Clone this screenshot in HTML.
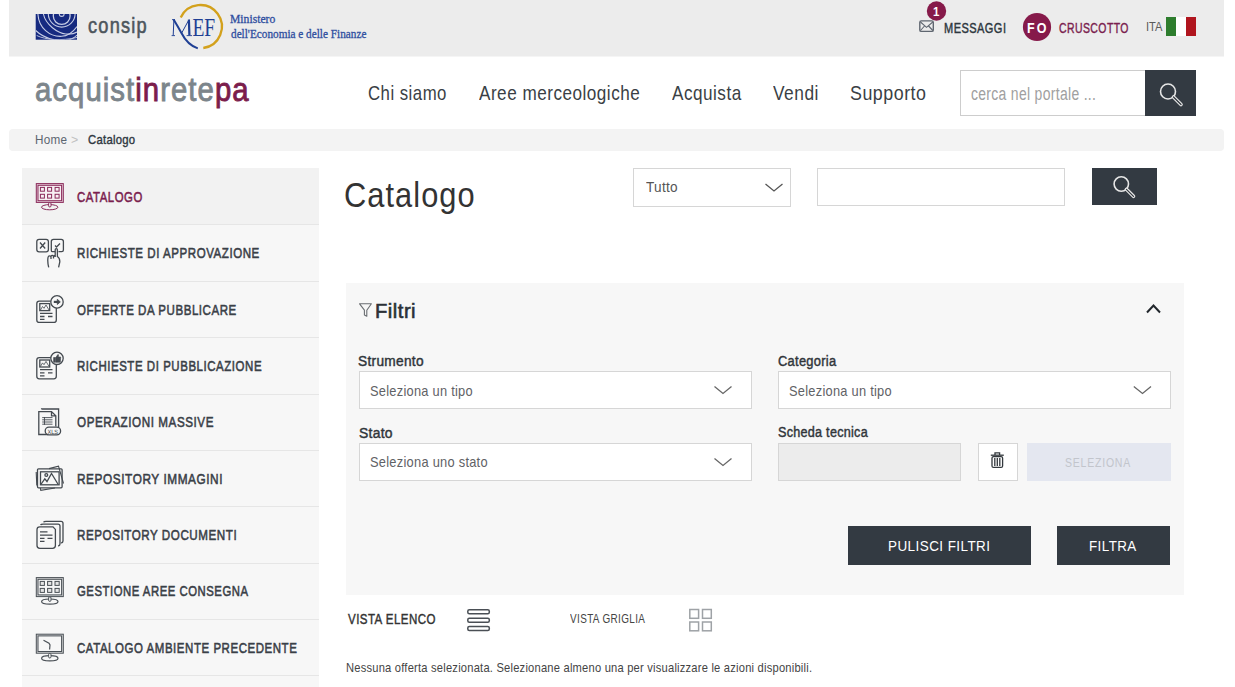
<!DOCTYPE html>
<html><head><meta charset="utf-8"><title>Catalogo</title>
<style>
html,body{margin:0;padding:0;background:#fff;width:1235px;height:687px;overflow:hidden;position:relative}
.tx{position:absolute;white-space:nowrap;line-height:1;transform-origin:0 0}
.r{position:absolute;box-sizing:border-box}
svg{position:absolute;overflow:visible}
</style></head><body>
<!-- top bar -->
<div class="r" style="left:9px;top:0;width:1215px;height:56px;background:#ececec"></div>
<div class="r" style="left:9px;top:56px;width:1215px;height:1px;background:#f5f5f5"></div>
<!-- breadcrumb -->
<div class="r" style="left:9px;top:129px;width:1215px;height:22px;background:#f3f3f3;border-radius:4px"></div>
<!-- search -->
<div class="r" style="left:960px;top:70px;width:186px;height:46px;background:#fff;border:1px solid #cdcdcd;border-right:none"></div>
<div class="r" style="left:1145px;top:70px;width:51px;height:46px;background:#333a42"></div>
<!-- sidebar -->
<div class="r" style="left:22px;top:168px;width:297px;height:56px;background:#f2f2f2"></div>
<div class="r" style="left:22px;top:224px;width:297px;height:463px;background:#f7f7f7"></div>
<div class="r" style="left:22px;top:224px;width:297px;height:1px;background:#e6e6e6"></div>
<div class="r" style="left:22px;top:280.5px;width:297px;height:1px;background:#e6e6e6"></div>
<div class="r" style="left:22px;top:337px;width:297px;height:1px;background:#e6e6e6"></div>
<div class="r" style="left:22px;top:393.5px;width:297px;height:1px;background:#e6e6e6"></div>
<div class="r" style="left:22px;top:450px;width:297px;height:1px;background:#e6e6e6"></div>
<div class="r" style="left:22px;top:506px;width:297px;height:1px;background:#e6e6e6"></div>
<div class="r" style="left:22px;top:563px;width:297px;height:1px;background:#e6e6e6"></div>
<div class="r" style="left:22px;top:619px;width:297px;height:1px;background:#e6e6e6"></div>
<div class="r" style="left:22px;top:675px;width:297px;height:1px;background:#e6e6e6"></div>
<!-- content top controls -->
<div class="r" style="left:633px;top:168px;width:158px;height:39px;background:#fff;border:1px solid #d6d6d6"></div>
<div class="r" style="left:817px;top:168px;width:248px;height:38px;background:#fff;border:1px solid #d6d6d6"></div>
<div class="r" style="left:1092px;top:168px;width:65px;height:37px;background:#333a42"></div>
<!-- filter panel -->
<div class="r" style="left:346px;top:283px;width:838px;height:312px;background:#f7f7f7"></div>
<div class="r" style="left:359px;top:371px;width:393px;height:38px;background:#fff;border:1px solid #d6d6d6"></div>
<div class="r" style="left:778px;top:371px;width:393px;height:38px;background:#fff;border:1px solid #d6d6d6"></div>
<div class="r" style="left:359px;top:443px;width:393px;height:38px;background:#fff;border:1px solid #d6d6d6"></div>
<div class="r" style="left:778px;top:443px;width:183px;height:38px;background:#ececec;border:1px solid #d6d6d6"></div>
<div class="r" style="left:978px;top:443px;width:40px;height:38px;background:#fff;border:1px solid #d6d6d6"></div>
<div class="r" style="left:1027px;top:443px;width:144px;height:38px;background:#e4e7f0"></div>
<div class="r" style="left:848px;top:526px;width:183px;height:39px;background:#333a42"></div>
<div class="r" style="left:1057px;top:526px;width:113px;height:39px;background:#333a42"></div>
<!-- flag -->
<div class="r" style="left:1166px;top:17px;width:10px;height:19px;background:#2e7d2e"></div>
<div class="r" style="left:1176px;top:17px;width:10px;height:19px;background:#ffffff"></div>
<div class="r" style="left:1186px;top:17px;width:10px;height:19px;background:#b0151e"></div>
<svg width="1235" height="687" style="left:0;top:0" viewBox="0 0 1235 687">
  <!-- consip logo -->
  <defs><clipPath id="cl"><rect x="35.7" y="14" width="41.3" height="25.7"/></clipPath></defs>
  <rect x="35.7" y="14" width="41.3" height="25.7" fill="#162a80"/>
  <g clip-path="url(#cl)"><g fill="none" stroke="#c6cce4" stroke-width="1.1" transform="translate(35.7 14)">
    <circle cx="26" cy="0" r="2.4"/>
    <circle cx="26" cy="2" r="8.4" stroke-width="1.3"/>
    <circle cx="26" cy="-0.3" r="13.4"/>
    <path d="M2.2 0 C3 14, 14 23, 26 22.3 C33 22, 38 17, 41.3 12.5"/>
    <path d="M7.7 0 C10 11, 22 19, 30 20 C35 20.5, 39 19.5, 41.3 18"/>
    <path d="M0 16.5 C8 24, 20 27.5, 30 26.5 C35 25.8, 39 23.5, 41.3 21"/>
    <path d="M1 21.5 C10 26, 26 27, 41.3 23.5" stroke-width="0.9"/>
  </g></g>
  <!-- MEF logo -->
  <path d="M180.72 17.47 A21.6 21.6 0 1 1 203.31 47.99" fill="none" stroke="#d3a11c" stroke-width="2.3"/>
  <g fill="none" stroke="#1f3f94" stroke-linecap="butt">
    <path d="M173.9 19.8 L173.2 35.4" stroke-width="1"/>
    <path d="M171.6 35.6 H175" stroke-width="0.9"/>
    <path d="M173.6 19.6 Q177.5 26 181.3 32.8 Q187.5 45 197.8 48.4" stroke-width="2"/>
    <path d="M181.6 33.2 L189 19.6" stroke-width="1"/>
    <path d="M188.9 19.6 L189.4 35.4" stroke-width="2.2"/>
    <path d="M186.6 35.6 H192" stroke-width="0.9"/>
    <path d="M172 19.6 H175" stroke-width="0.9"/>
  </g>
  <text x="192.4" y="35.7" font-family="Liberation Serif" font-size="24.6" fill="#1f3f94" textLength="22.8" lengthAdjust="spacingAndGlyphs">EF</text>
  <!-- envelope -->
  <rect x="919.8" y="20.9" width="13.5" height="10.5" rx="1.5" fill="none" stroke="#5f6670" stroke-width="1.4"/>
  <path d="M920.5 22 L926.5 27.3 L932.8 22 M920.5 30.5 L924.5 26 M932.8 30.5 L928.6 26" fill="none" stroke="#5f6670" stroke-width="1.1"/>
  <!-- badge -->
  <circle cx="936.5" cy="11" r="9.7" fill="#861a4a"/>
  <circle cx="1037" cy="27" r="14.1" fill="#861a4a"/>
  <!-- search icon header -->
  <circle cx="1168" cy="91.5" r="7.5" fill="none" stroke="#e6e6e6" stroke-width="1.6"/>
  <path d="M1173.5 97 L1181 104.5" stroke="#e6e6e6" stroke-width="3.6" stroke-linecap="round"/>
  <path d="M1173.5 97 L1181 104.5" stroke="#30363d" stroke-width="1.2" stroke-linecap="round"/>
  <!-- search icon content -->
  <circle cx="1121.3" cy="184" r="7.2" fill="none" stroke="#e6e6e6" stroke-width="1.6"/>
  <path d="M1126.5 189.3 L1133.5 196.3" stroke="#e6e6e6" stroke-width="3.6" stroke-linecap="round"/>
  <path d="M1126.5 189.3 L1133.5 196.3" stroke="#30363d" stroke-width="1.2" stroke-linecap="round"/>
  <!-- chevrons -->
  <path d="M765.5 184 L774 191 L782.5 184" fill="none" stroke="#555" stroke-width="1.3"/>
  <path d="M714.5 386.5 L723 393.5 L731.5 386.5" fill="none" stroke="#666" stroke-width="1.3"/>
  <path d="M1133.8 386.5 L1142.5 393.5 L1151 386.5" fill="none" stroke="#666" stroke-width="1.3"/>
  <path d="M714.5 458.5 L723 465.5 L731.5 458.5" fill="none" stroke="#666" stroke-width="1.3"/>
  <!-- caret up -->
  <path d="M1147 312.5 L1153.5 305.5 L1160 312.5" fill="none" stroke="#22272c" stroke-width="2"/>
  <!-- funnel -->
  <path d="M359.6 303.8 L371.4 303.8 L366.8 310.2 L366.8 316.2 L364.4 315 L364.4 310.2 Z" fill="none" stroke="#6a6e72" stroke-width="1.1" stroke-linejoin="round"/>
  <!-- trash -->
  <g fill="none" stroke="#33383d" stroke-width="1.3">
    <path d="M990.8 455.2 L1003.8 455.2"/>
    <path d="M995 455 L995 452.8 L999.6 452.8 L999.6 455"/>
    <rect x="992" y="456.6" width="10.6" height="10.8" rx="1.5"/>
    <path d="M994.8 458 V466 M997.3 458 V466 M999.8 458 V466"/>
  </g>
  <!-- list icon -->
  <g fill="none" stroke="#4a4f55" stroke-width="1.5">
    <rect x="467.8" y="609.8" width="21.5" height="4" rx="1.5"/>
    <rect x="467.8" y="618.2" width="21.5" height="4" rx="1.5"/>
    <rect x="467.8" y="626.6" width="21.5" height="4" rx="1.5"/>
  </g>
  <!-- grid icon -->
  <g fill="none" stroke="#9ea2a6" stroke-width="1.5">
    <rect x="689.8" y="609.5" width="8.8" height="8.8"/>
    <rect x="702.5" y="609.5" width="8.8" height="8.8"/>
    <rect x="689.8" y="622" width="8.8" height="8.8"/>
    <rect x="702.5" y="622" width="8.8" height="8.8"/>
  </g>
  <!-- sidebar icons -->
  <!-- 0 catalogo monitor (maroon) -->
  <g fill="none" stroke="#8a2a5a" stroke-width="1">
    <rect x="36.3" y="183.6" width="27" height="18.8" fill="#e6cfda"/>
    <rect x="38" y="185.3" width="23.6" height="15.4" fill="#f7f0f3"/>
    <rect x="40.4" y="187.4" width="4" height="3.8"/><rect x="47.6" y="187.4" width="4" height="3.8"/><rect x="55.1" y="187.4" width="4" height="3.8"/>
    <rect x="40.4" y="194.3" width="4" height="3.8"/><rect x="47.6" y="194.3" width="4" height="3.8"/><rect x="55.1" y="194.3" width="4" height="3.8"/>
    <ellipse cx="49.7" cy="207.2" rx="8.2" ry="2.6"/>
    <rect x="48.6" y="202.5" width="2.4" height="4.5" rx="1.2" fill="#f2f2f2"/>
  </g>
  <g fill="none" stroke="#444a50" stroke-width="1.3">
    <!-- 1 approvazione -->
    <rect x="36.8" y="239.3" width="11.6" height="12.6" rx="2.3"/>
    <path d="M40 242.5 L45.2 248.5 M45.2 242.5 L40 248.5"/>
    <path d="M55 251.7 L52 251.7 Q51.3 251.7 51.3 250 L51.3 241.5 Q51.3 239.3 53.5 239.3 L61.2 239.3 Q63.4 239.3 63.4 241.5 L63.4 250 Q63.4 251.7 61.7 251.7 L58.5 251.7"/>
    <path d="M55 245.5 L56.5 247 L60 243.5"/>
    <path d="M55.2 257 V249.8 Q55.2 248.6 56.3 248.6 Q57.4 248.6 57.4 249.8 V256.5 Q60 258 59.8 262 L58.6 267.3 M48.7 267.3 Q47.3 262 48 257.5 Q48.2 255.9 49.6 255.9 Q51 255.9 51 257.5 V259 M51 256.8 Q51 255.3 52.3 255.3 Q53.5 255.3 53.5 256.8 V258.5 M53.5 256.5 Q53.7 255.5 55.2 255.8"/>
    <!-- 2 offerte da pubblicare -->
    <rect x="36.8" y="301.2" width="19.5" height="21.2" rx="2.5"/>
    <rect x="39.8" y="303.6" width="9.9" height="7" /><path d="M40.5 310 L42.5 306.5 L44 308.3 L46 305 L49 310" stroke-width="0.8"/>
    <path d="M40 313.3 H52.5 M40 316.5 H44.5 M48 316.5 H52.5 M40 319.4 H44.5"/>
    <circle cx="57" cy="301.9" r="6.2" fill="#f7f7f7"/>
    <path d="M53.8 301.9 H58" stroke-width="2.2"/><path d="M57.3 299.3 L60.3 301.9 L57.3 304.5 Z" fill="#444a50" stroke-width="0.8"/>
    <!-- 3 richieste pubblicazione -->
    <rect x="36.8" y="357.6" width="19.5" height="21.2" rx="2.5"/>
    <rect x="39.8" y="360" width="9.9" height="7" /><path d="M40.5 366.4 L42.5 362.9 L44 364.7 L46 361.4 L49 366.4" stroke-width="0.8"/>
    <path d="M40 369.7 H52.5 M40 372.9 H44.5 M48 372.9 H52.5 M40 375.8 H44.5"/>
    <circle cx="57" cy="358.3" r="6.2" fill="#f7f7f7"/>
    <path d="M53.6 357.5 h2 v4.8 h-2 z M56 357.3 L57.8 354.6 L58.5 354.8 L58.3 357 L60.7 357 L60.3 362.3 L56 362.3 Z" fill="#444a50" stroke-width="0.6"/>
    <!-- 4 operazioni massive -->
    <path d="M41.6 409.2 V409 H58.6 V427"/>
    <path d="M48.2 434.5 H38.8 V411.6 H51.5 L55.8 415.8 V426.5 M51.5 411.6 V415.8 H55.8"/>
    <path d="M42.2 417.6 H52.5 M42.2 419.8 H52.5 M42.2 422 H52.5 M42.2 424.2 H52.5 M44.5 417 V424.8" stroke-width="0.9"/>
    <rect x="45.2" y="427.2" width="15.4" height="7.6" rx="3.8" fill="#f7f7f7"/>
    <text x="47.5" y="433.6" font-family="Liberation Sans" font-size="6.2" fill="#3a3f45" stroke="none" textLength="10.6" lengthAdjust="spacingAndGlyphs" text-rendering="geometricPrecision">XLS</text>
    <!-- 5 repository immagini -->
    <path d="M49 468.6 L58.5 466.2 L63.5 483.5 M36.2 472 L36.8 485.5 M40.3 487.8 L40.8 490.3 L55 488" stroke-width="1.1"/>
    <rect x="37.5" y="468.8" width="24.6" height="19" rx="1"/>
    <rect x="40.5" y="471.8" width="18.6" height="13"/>
    <path d="M40.8 484.5 L44.8 478.8 L47 481.5 L51.5 473.5 L58.2 484.5"/>
    <circle cx="46.3" cy="475" r="1.4"/>
    <!-- 6 repository documenti -->
    <path d="M43.5 522.2 Q44 521.3 46 521.3 H61 Q63 521.3 63 523.3 V541 Q63 542.5 61.2 543"/>
    <path d="M40.5 525 Q41 524.2 43 524.2 H58 Q60 524.2 60 526.2 V544 Q60 545.5 58.2 546"/>
    <path d="M53 526.8 H39.8 Q37 526.8 37 529.5 V545.6 Q37 548.3 39.8 548.3 H52.6 Q55.4 548.3 55.4 545.6 V529.4 Z"/>
    <path d="M40 531.8 H47.5 M40 535.1 H52.5 M40 538.3 H44.5 M47.5 538.3 H52.5 M40 541.4 H44.5"/>
    <!-- 7 gestione aree consegna -->
  </g><g fill="none" stroke="#4a5056" stroke-width="1">
    <rect x="36.3" y="577.6" width="27" height="19" fill="#d8d9da"/>
    <rect x="38" y="579.3" width="23.6" height="15.6" fill="#f7f7f7"/>
    <rect x="40.2" y="581.4" width="4.2" height="4" fill="#e5e5e5"/><rect x="47.6" y="581.4" width="4.2" height="4" fill="#e5e5e5"/><rect x="55" y="581.4" width="4.2" height="4" fill="#e5e5e5"/>
    <rect x="40.2" y="588.4" width="4.2" height="4" fill="#e5e5e5"/><rect x="47.6" y="588.4" width="4.2" height="4" fill="#e5e5e5"/><rect x="55" y="588.4" width="4.2" height="4" fill="#e5e5e5"/>
    <ellipse cx="49.8" cy="601.6" rx="8.2" ry="2.6" stroke-width="1.2"/>
    <rect x="48.6" y="596.8" width="2.4" height="4.6" rx="1.2" fill="#f7f7f7"/>
  <!-- 8 catalogo ambiente precedente -->
    <rect x="36.3" y="634.2" width="27" height="19" fill="#d8d9da"/>
    <rect x="38" y="635.9" width="23.6" height="15.6" fill="#f7f7f7"/>
    <path d="M43.5 640.3 L49 643.3 L50 645 L49.6 649.5" stroke-width="1.2"/>
    <ellipse cx="49.8" cy="658.2" rx="8.2" ry="2.6" stroke-width="1.2"/>
    <rect x="48.6" y="653.4" width="2.4" height="4.6" rx="1.2" fill="#f7f7f7"/>
  </g>
</svg>

<div class='tx' style='left:87.57px;top:14.80px;font-family:"Liberation Sans";font-size:22px;font-weight:normal;color:#4d565d;letter-spacing:1.5px;transform:scaleX(0.8261);-webkit-text-stroke:0.6px #4d565d'>consip</div><div class='tx' style='left:230.33px;top:13.20px;font-family:"Liberation Serif";font-size:12px;font-weight:normal;color:#2f4f9f;letter-spacing:0px;transform:scaleX(0.9711);-webkit-text-stroke:0.3px #2f4f9f'>Ministero</div><div class='tx' style='left:231.30px;top:28.00px;font-family:"Liberation Serif";font-size:12px;font-weight:normal;color:#2f4f9f;letter-spacing:0px;transform:scaleX(0.9375);-webkit-text-stroke:0.3px #2f4f9f'>dell'Economia e delle Finanze</div><div class='tx' style='left:944.24px;top:20.60px;font-family:"Liberation Sans";font-size:14.5px;font-weight:normal;color:#2e3740;letter-spacing:0.6px;transform:scaleX(0.7595);-webkit-text-stroke:0.43px #2e3740'>MESSAGGI</div><div class='tx' style='left:1058.78px;top:20.60px;font-family:"Liberation Sans";font-size:14.5px;font-weight:normal;color:#7b1f4f;letter-spacing:0.6px;transform:scaleX(0.7211);-webkit-text-stroke:0.43px #7b1f4f'>CRUSCOTTO</div><div class='tx' style='left:933.02px;top:4.70px;font-family:"Liberation Sans";font-size:13px;font-weight:bold;color:#ffffff;letter-spacing:0px;transform:scaleX(0.8833)'>1</div><div class='tx' style='left:1027.37px;top:20.00px;font-family:"Liberation Sans";font-size:15px;font-weight:bold;color:#ffffff;letter-spacing:2.5px;transform:scaleX(0.8318)'>FO</div><div class='tx' style='left:1146.11px;top:20.60px;font-family:"Liberation Sans";font-size:12.5px;font-weight:normal;color:#5a5a5a;letter-spacing:0px;transform:scaleX(0.8889)'>ITA</div><div class='tx' style='left:35.11px;top:72.50px;font-family:"Liberation Sans";font-size:33px;font-weight:normal;color:#7c858b;letter-spacing:1.2px;transform:scaleX(0.8875);-webkit-text-stroke:0.9px #7c858b'>acquist<span style="color:#7b1d4c;-webkit-text-stroke-color:#7b1d4c">in</span>rete<span style="color:#7b1d4c;-webkit-text-stroke-color:#7b1d4c">pa</span></div><div class='tx' style='left:367.70px;top:81.60px;font-family:"Liberation Sans";font-size:21px;font-weight:normal;color:#3a3f45;letter-spacing:0.6px;transform:scaleX(0.7990)'>Chi siamo</div><div class='tx' style='left:479.00px;top:81.60px;font-family:"Liberation Sans";font-size:21px;font-weight:normal;color:#3a3f45;letter-spacing:0.6px;transform:scaleX(0.8163)'>Aree merceologiche</div><div class='tx' style='left:671.80px;top:81.50px;font-family:"Liberation Sans";font-size:21px;font-weight:normal;color:#3a3f45;letter-spacing:0.6px;transform:scaleX(0.8165)'>Acquista</div><div class='tx' style='left:773.40px;top:81.50px;font-family:"Liberation Sans";font-size:21px;font-weight:normal;color:#3a3f45;letter-spacing:0.6px;transform:scaleX(0.8259)'>Vendi</div><div class='tx' style='left:849.65px;top:81.50px;font-family:"Liberation Sans";font-size:21px;font-weight:normal;color:#3a3f45;letter-spacing:0.6px;transform:scaleX(0.8500)'>Supporto</div><div class='tx' style='left:970.92px;top:84.60px;font-family:"Liberation Sans";font-size:18px;font-weight:normal;color:#a0a0a0;letter-spacing:0.4px;transform:scaleX(0.7755)'>cerca nel portale ...</div><div class='tx' style='left:35.30px;top:133.00px;font-family:"Liberation Sans";font-size:13px;font-weight:normal;color:#5b6670;letter-spacing:0.3px;transform:scaleX(0.9000)'>Home</div><div class='tx' style='left:71.35px;top:132.50px;font-family:"Liberation Sans";font-size:13px;font-weight:normal;color:#c0c0c0;letter-spacing:0px;transform:scaleX(0.9500)'>&gt;</div><div class='tx' style='left:87.83px;top:133.00px;font-family:"Liberation Sans";font-size:13px;font-weight:normal;color:#2e3740;letter-spacing:0.3px;transform:scaleX(0.8698);-webkit-text-stroke:0.39px #2e3740'>Catalogo</div><div class='tx' style='left:76.92px;top:190.00px;font-family:"Liberation Sans";font-size:14.5px;font-weight:normal;color:#7b1f4f;letter-spacing:0.7px;transform:scaleX(0.7829);-webkit-text-stroke:0.55px #7b1f4f'>CATALOGO</div><div class='tx' style='left:76.90px;top:246.33px;font-family:"Liberation Sans";font-size:14.5px;font-weight:normal;color:#3a4047;letter-spacing:0.7px;transform:scaleX(0.7952);-webkit-text-stroke:0.55px #3a4047'>RICHIESTE DI APPROVAZIONE</div><div class='tx' style='left:76.91px;top:302.66px;font-family:"Liberation Sans";font-size:14.5px;font-weight:normal;color:#3a4047;letter-spacing:0.7px;transform:scaleX(0.7935);-webkit-text-stroke:0.55px #3a4047'>OFFERTE DA PUBBLICARE</div><div class='tx' style='left:76.91px;top:358.99px;font-family:"Liberation Sans";font-size:14.5px;font-weight:normal;color:#3a4047;letter-spacing:0.7px;transform:scaleX(0.7905);-webkit-text-stroke:0.55px #3a4047'>RICHIESTE DI PUBBLICAZIONE</div><div class='tx' style='left:76.90px;top:415.32px;font-family:"Liberation Sans";font-size:14.5px;font-weight:normal;color:#3a4047;letter-spacing:0.7px;transform:scaleX(0.8036);-webkit-text-stroke:0.55px #3a4047'>OPERAZIONI MASSIVE</div><div class='tx' style='left:76.89px;top:471.65px;font-family:"Liberation Sans";font-size:14.5px;font-weight:normal;color:#3a4047;letter-spacing:0.7px;transform:scaleX(0.8148);-webkit-text-stroke:0.55px #3a4047'>REPOSITORY IMMAGINI</div><div class='tx' style='left:76.90px;top:527.98px;font-family:"Liberation Sans";font-size:14.5px;font-weight:normal;color:#3a4047;letter-spacing:0.7px;transform:scaleX(0.8005);-webkit-text-stroke:0.55px #3a4047'>REPOSITORY DOCUMENTI</div><div class='tx' style='left:76.92px;top:584.31px;font-family:"Liberation Sans";font-size:14.5px;font-weight:normal;color:#3a4047;letter-spacing:0.7px;transform:scaleX(0.7798);-webkit-text-stroke:0.55px #3a4047'>GESTIONE AREE CONSEGNA</div><div class='tx' style='left:76.91px;top:640.64px;font-family:"Liberation Sans";font-size:14.5px;font-weight:normal;color:#3a4047;letter-spacing:0.7px;transform:scaleX(0.7913);-webkit-text-stroke:0.55px #3a4047'>CATALOGO AMBIENTE PRECEDENTE</div><div class='tx' style='left:343.64px;top:176.70px;font-family:"Liberation Sans";font-size:35px;font-weight:normal;color:#333333;letter-spacing:1.2px;transform:scaleX(0.8800)'>Catalogo</div><div class='tx' style='left:645.70px;top:179.40px;font-family:"Liberation Sans";font-size:15px;font-weight:normal;color:#555555;letter-spacing:0.3px;transform:scaleX(0.9059)'>Tutto</div><div class='tx' style='left:374.98px;top:300.60px;font-family:"Liberation Sans";font-size:20px;font-weight:normal;color:#2b3036;letter-spacing:0.5px;transform:scaleX(1.0081);-webkit-text-stroke:0.6px #2b3036'>Filtri</div><div class='tx' style='left:358.42px;top:354.20px;font-family:"Liberation Sans";font-size:14px;font-weight:normal;color:#30353a;letter-spacing:0.3px;transform:scaleX(0.9788);-webkit-text-stroke:0.42px #30353a'>Strumento</div><div class='tx' style='left:777.78px;top:354.10px;font-family:"Liberation Sans";font-size:14px;font-weight:normal;color:#30353a;letter-spacing:0.3px;transform:scaleX(0.9210);-webkit-text-stroke:0.42px #30353a'>Categoria</div><div class='tx' style='left:358.51px;top:425.60px;font-family:"Liberation Sans";font-size:14px;font-weight:normal;color:#30353a;letter-spacing:0.3px;transform:scaleX(0.9906);-webkit-text-stroke:0.42px #30353a'>Stato</div><div class='tx' style='left:777.80px;top:425.40px;font-family:"Liberation Sans";font-size:14px;font-weight:normal;color:#30353a;letter-spacing:0.3px;transform:scaleX(0.9000);-webkit-text-stroke:0.42px #30353a'>Scheda tecnica</div><div class='tx' style='left:369.94px;top:383.00px;font-family:"Liberation Sans";font-size:15px;font-weight:normal;color:#5f6266;letter-spacing:0.3px;transform:scaleX(0.8559)'>Seleziona un tipo</div><div class='tx' style='left:788.84px;top:383.00px;font-family:"Liberation Sans";font-size:15px;font-weight:normal;color:#5f6266;letter-spacing:0.3px;transform:scaleX(0.8559)'>Seleziona un tipo</div><div class='tx' style='left:370.14px;top:454.30px;font-family:"Liberation Sans";font-size:15px;font-weight:normal;color:#5f6266;letter-spacing:0.3px;transform:scaleX(0.8574)'>Seleziona uno stato</div><div class='tx' style='left:1065.22px;top:456.00px;font-family:"Liberation Sans";font-size:13.5px;font-weight:normal;color:#c2c5cc;letter-spacing:1px;transform:scaleX(0.7783)'>SELEZIONA</div><div class='tx' style='left:887.83px;top:538.30px;font-family:"Liberation Sans";font-size:15.5px;font-weight:normal;color:#ffffff;letter-spacing:0.5px;transform:scaleX(0.8696)'>PULISCI FILTRI</div><div class='tx' style='left:1089.14px;top:538.30px;font-family:"Liberation Sans";font-size:15.5px;font-weight:normal;color:#ffffff;letter-spacing:0.5px;transform:scaleX(0.8630)'>FILTRA</div><div class='tx' style='left:347.90px;top:611.40px;font-family:"Liberation Sans";font-size:15px;font-weight:normal;color:#333333;letter-spacing:0.6px;transform:scaleX(0.7681);-webkit-text-stroke:0.45px #333333'>VISTA ELENCO</div><div class='tx' style='left:569.60px;top:611.80px;font-family:"Liberation Sans";font-size:13.5px;font-weight:normal;color:#444444;letter-spacing:0.5px;transform:scaleX(0.7363)'>VISTA GRIGLIA</div><div class='tx' style='left:346.14px;top:660.80px;font-family:"Liberation Sans";font-size:13px;font-weight:normal;color:#444444;letter-spacing:0.25px;transform:scaleX(0.8577)'>Nessuna offerta selezionata. Selezionane almeno una per visualizzare le azioni disponibili.</div>
</body></html>
